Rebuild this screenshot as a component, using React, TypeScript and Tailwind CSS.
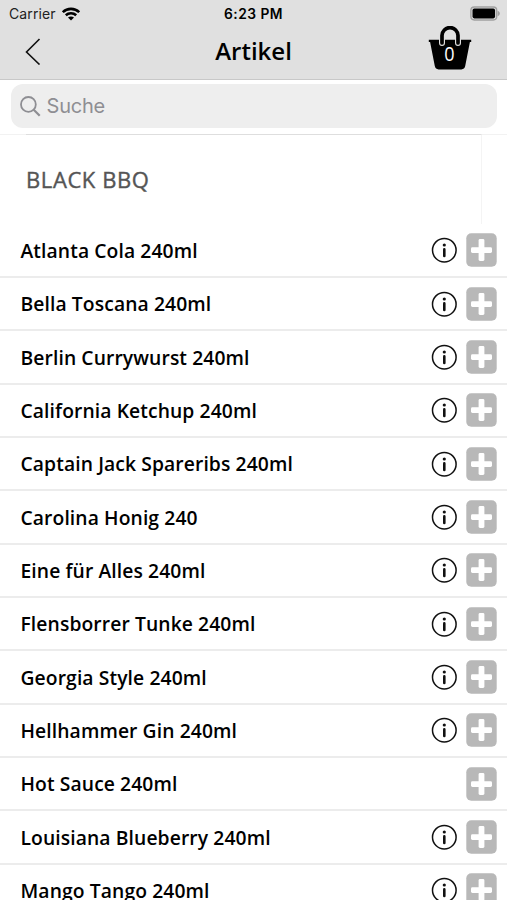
type Article = { name: string; info: boolean };

const articles: Article[] = [
  { name: "Atlanta Cola 240ml", info: true },
  { name: "Bella Toscana 240ml", info: true },
  { name: "Berlin Currywurst 240ml", info: true },
  { name: "California Ketchup 240ml", info: true },
  { name: "Captain Jack Spareribs 240ml", info: true },
  { name: "Carolina Honig 240", info: true },
  { name: "Eine für Alles 240ml", info: true },
  { name: "Flensborrer Tunke 240ml", info: true },
  { name: "Georgia Style 240ml", info: true },
  { name: "Hellhammer Gin 240ml", info: true },
  { name: "Hot Sauce 240ml", info: false },
  { name: "Louisiana Blueberry 240ml", info: true },
  { name: "Mango Tango 240ml", info: true },
];

function WifiIcon() {
  return (
    <svg width="18" height="14" viewBox="0 0 18 14" fill="none" stroke="#000" strokeWidth="2.6">
      <path d="M.8 5.2C5.2.8 12.8.8 17.2 5.2" />
      <path d="M3.8 8.2c2.9-2.7 7.5-2.7 10.4 0" />
      <path d="M9 13.5l-3-3c1.7-1.5 4.3-1.5 6 0z" fill="#000" stroke="none" />
    </svg>
  );
}

function BatteryIcon() {
  return (
    <svg width="31" height="16" viewBox="0 0 31 16">
      <rect x="0.9" y="1" width="25.8" height="13" rx="3.4" fill="none" stroke="#a0a0a0" strokeWidth="1.4" />
      <rect x="2.5" y="2.6" width="22.6" height="9.8" rx="1.8" fill="#000" />
      <path d="M27.6 4.8c3 1.2 3 4.2 0 5.4z" fill="#a0a0a0" />
    </svg>
  );
}

function BasketIcon() {
  return (
    <svg width="44" height="46" viewBox="0 0 44 46">
      <path d="M.8 13.8h42.4v2.3h-1.3l-4.7 24c-.5 2.3-1.7 3.3-3.8 3.3H10.6c-2.1 0-3.3-1-3.8-3.3L2.1 16.1H.8z" fill="#000" />
      <path d="M14 17V9.6a8 8 0 0 1 16 0V17" fill="none" stroke="#e0e0e0" strokeWidth="6" strokeLinecap="round" />
      <path d="M14 17V9.6a8 8 0 0 1 16 0V17" fill="none" stroke="#000" strokeWidth="3.7" strokeLinecap="round" />
    </svg>
  );
}

function InfoIcon() {
  return (
    <svg width="26" height="26" viewBox="0 0 26 26">
      <circle cx="13.3" cy="13.2" r="11.8" fill="none" stroke="#111" strokeWidth="1.5" />
      <circle cx="13.3" cy="8" r="1.6" fill="#111" />
      <path d="M13.3 12.4V19" stroke="#111" strokeWidth="2.6" strokeLinecap="round" />
    </svg>
  );
}

function AddIcon() {
  return (
    <svg width="31" height="34" viewBox="0 0 31 34">
      <rect x="0.3" y="0.3" width="30.4" height="33.4" rx="5" fill="#b8b8b8" />
      <rect x="12.6" y="6" width="5.8" height="22" rx="1.4" fill="#fff" />
      <rect x="5" y="14.3" width="21" height="5.6" rx="1.4" fill="#fff" />
    </svg>
  );
}

export default function App() {
  return (
    <div className="h-[900px] w-[507px] overflow-hidden bg-white font-['Open_Sans',sans-serif] text-black">
      <header className="h-20 border-b border-[#c8c8c8] bg-[#e0e0e0]">
        <div className="grid h-[27px] grid-cols-3 items-center pr-[6px] pl-[9px] font-['Inter',sans-serif]">
          <div className="flex items-center gap-[6px] text-[14px] tracking-[0.1px] text-[#222]">
            <span>Carrier</span>
            <WifiIcon />
          </div>
          <span className="-ml-[3px] pt-px text-center text-[13.8px] font-semibold tracking-[0.45px] whitespace-nowrap">
            6:23 PM
          </span>
          <div className="flex justify-end">
            <BatteryIcon />
          </div>
        </div>
        <div className="grid h-[48px] grid-cols-[1fr_auto_1fr] items-center px-[25px]">
          <svg width="16" height="28" viewBox="0 0 16 28" fill="none" stroke="#111" strokeWidth="1.6">
            <path d="M14.5 2L1.5 15l13 12.5" />
          </svg>
          <h1 className="text-center text-[24px] font-semibold">Artikel</h1>
          <div className="relative mr-[10px] -mt-[5px] h-[46px] w-11 justify-self-end">
            <BasketIcon />
            <span className="absolute inset-x-0 top-[13px] -ml-px scale-x-90 text-center text-[20px] leading-[30px] text-white">
              0
            </span>
          </div>
        </div>
      </header>

      <div className="h-[54px] px-[10.5px] pt-1">
        <div className="flex h-11 items-center rounded-[12px] bg-[#eeeeee] pl-[9px] text-[#8e8e93]">
          <svg width="21" height="21" viewBox="0 0 21 21" fill="none" stroke="#8e8e93" strokeWidth="1.8">
            <circle cx="8.4" cy="8.4" r="7.4" />
            <path d="M13.7 13.7l6 6" strokeWidth="2.2" />
          </svg>
          <span className="ml-[6px] font-['Inter',sans-serif] text-[20px] tracking-[-0.2px]">Suche</span>
        </div>
      </div>

      <section className="grid h-[90.667px] grid-cols-[26px_1fr_25px]">
        <div className="h-px bg-[#f2f2f2]" />
        <h2 className="flex h-[90px] items-center border-t border-r border-t-[#dedede] border-r-[#f4f4f4] text-[22px] tracking-[0.6px] text-[#555] [-webkit-text-stroke:0.4px_#555]">
          <span>BLACK BBQ</span>
        </h2>
        <div className="h-px bg-[#f2f2f2]" />
      </section>

      <ul>
        {articles.map((article) => (
          <li
            key={article.name}
            className="flex h-[53.333px] items-center border-b-2 border-[#ececec] pr-[10px] pl-[20.5px]"
          >
            <span className="grow pt-[1.5px] text-[19.3px] leading-[26px] font-semibold tracking-[0.1px] whitespace-nowrap">
              {article.name}
            </span>
            {article.info && <InfoIcon />}
            <span className="ml-[9px]">
              <AddIcon />
            </span>
          </li>
        ))}
      </ul>
    </div>
  );
}
